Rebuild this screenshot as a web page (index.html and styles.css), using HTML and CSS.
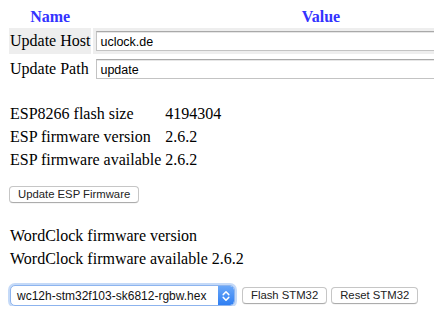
FILE: index.html
```html
<!DOCTYPE html>
<html>
<head>
<meta charset="utf-8">
<link rel="stylesheet" href="styles.css">
</head>
<body>
<table class="cfg">
  <tr><th class="name-h">Name</th><th class="value-h">Value</th></tr>
  <tr class="hl"><td class="lbl">Update Host</td><td class="val"><input class="txt" type="text" value="uclock.de"></td></tr>
  <tr><td class="lbl">Update Path</td><td class="val"><input class="txt" type="text" value="update"></td></tr>
</table>

<table class="info esp">
  <tr><td>ESP8266 flash size</td><td>4194304</td></tr>
  <tr><td>ESP firmware version</td><td>2.6.2</td></tr>
  <tr><td>ESP firmware available</td><td>2.6.2</td></tr>
</table>

<div class="actions first"><button class="btn">Update ESP Firmware</button></div>

<table class="info wc">
  <tr><td>WordClock firmware version</td><td></td></tr>
  <tr><td>WordClock firmware available</td><td>2.6.2</td></tr>
</table>

<div class="actions last">
  <div class="select">
    <span class="select-text">wc12h-stm32f103-sk6812-rgbw.hex</span>
    <span class="select-arrow">
      <svg width="8" height="12" viewBox="0 0 8 12"><path d="M1.2 4.6 L4 1.8 L6.8 4.6 M1.2 7.4 L4 10.2 L6.8 7.4" fill="none" stroke="#fff" stroke-width="1.5" stroke-linecap="round" stroke-linejoin="round"/></svg>
    </span>
  </div>
  <button class="btn">Flash STM32</button>
  <button class="btn">Reset STM32</button>
</div>
</body>
</html>
```

FILE: styles.css
```css
html { overflow: hidden; }
body {
  margin: 0;
  padding: 6px 0 0 7px;
  font-family: "Liberation Serif", "Times New Roman", serif;
  font-size: 16px;
  color: #000;
  background: #fff;
}
table {
  border-collapse: separate;
  border-spacing: 2px;
}
td, th { padding: 1px; }
.cfg { width: 460px; table-layout: auto; }
.cfg th {
  color: #3333ff;
  font-weight: bold;
  text-align: center;
  padding: 0 1px;
}
.name-h { width: 80px; }
.hl td { background: #eeeeee; }
.lbl { white-space: nowrap; padding: 1px; }
.val { padding: 1px; }
.txt {
  display: block;
  box-sizing: border-box;
  width: 449px;
  height: 20px;
  margin: 2px;
  padding: 1px 3px 0;
  border: 1px solid #c3c3c3;
  border-top-color: #a9a9a9;
  background: #fff;
  font-family: "Liberation Sans", Arial, sans-serif;
  font-size: 12.5px;
  color: #000;
  box-shadow: inset 0 1px 0 #e6e6e6;
}
.info { margin-top: 17px; }
.info td { padding: 1px; height: 19px; }
.wc { margin-top: 20px; }
.actions { display: flex; align-items: center; padding-left: 2px; }
.first { margin-top: 14px; }
.last { margin-top: 14px; }
.btn {
  box-sizing: border-box;
  height: 17px;
  padding: 0 8px;
  border: 1px solid #c6c6c6;
  border-bottom-color: #acacac;
  border-radius: 4px;
  background: #fff;
  font-family: "Liberation Sans", Arial, sans-serif;
  font-size: 11.3px;
  line-height: 15px;
  color: #222;
  box-shadow: 0 0.5px 0 rgba(0,0,0,0.08);
}
.last .btn { margin-left: 4px; }
.last .btn:first-of-type { margin-left: 7px; }
.select {
  box-sizing: border-box;
  width: 225px;
  height: 21px;
  display: flex;
  align-items: center;
  border: 1px solid #8db4ee;
  border-radius: 5px;
  box-shadow: 0 0 0 2px #c5daf8;
  background: #fff;
  overflow: hidden;
  margin-left: 1px;
}
.select-text {
  flex: 1;
  padding-left: 6px;
  font-family: "Liberation Sans", Arial, sans-serif;
  font-size: 12px;
  color: #111;
  white-space: nowrap;
}
.select-arrow {
  width: 16px;
  height: 100%;
  display: flex;
  align-items: center;
  justify-content: center;
  background: linear-gradient(#6aa7f8, #2f7ff3);
  border-radius: 0 4px 4px 0;
}
```
